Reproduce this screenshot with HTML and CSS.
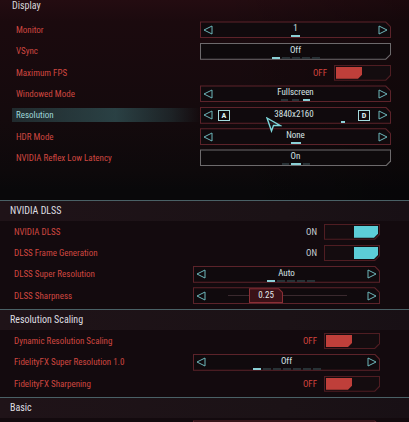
FILE: index.html
```html
<!DOCTYPE html>
<html>
<head>
<meta charset="utf-8">
<title>Graphics settings</title>
<link rel="stylesheet" href="styles.css">
</head>
<body>
<main class="settings">

  <section class="group group--display">
    <h2 class="group-title">Display</h2>
    <div class="rows">
      <div class="row">
        <span class="label">Monitor</span>
        <div class="control">
          <div class="select">
            <svg class="arrow" viewBox="0 0 10 10"><path d="M9 1 L1 5 L9 9 Z"/></svg>
            <div class="value"><span>1</span><span class="ticks"><i class="on w9"></i></span></div>
            <svg class="arrow" viewBox="0 0 10 10"><path d="M1 1 L9 5 L1 9 Z"/></svg>
          </div>
        </div>
      </div>
      <div class="row">
        <span class="label">VSync</span>
        <div class="control">
          <div class="button">
            <div class="value"><span>Off</span><span class="ticks"><i class="on"></i><i></i><i></i><i></i><i></i></span></div>
          </div>
        </div>
      </div>
      <div class="row">
        <span class="label">Maximum FPS</span>
        <div class="control control--toggle">
          <span class="state state--off">OFF</span>
          <span class="toggle toggle--off"><i class="fill"></i></span>
        </div>
      </div>
      <div class="row">
        <span class="label">Windowed Mode</span>
        <div class="control">
          <div class="select">
            <svg class="arrow" viewBox="0 0 10 10"><path d="M9 1 L1 5 L9 9 Z"/></svg>
            <div class="value"><span>Fullscreen</span><span class="ticks ticks--wide"><i class="w7"></i><i class="w7"></i><i class="on w7"></i></span></div>
            <svg class="arrow" viewBox="0 0 10 10"><path d="M1 1 L9 5 L1 9 Z"/></svg>
          </div>
        </div>
      </div>
      <div class="row row--active">
        <span class="label">Resolution</span>
        <div class="control">
          <div class="select">
            <svg class="arrow" viewBox="0 0 10 10"><path d="M9 1 L1 5 L9 9 Z"/></svg>
            <span class="key key--left">A</span>
            <div class="value"><span>3840x2160</span><span class="ticks ticks--offset"><i class="on w4"></i></span></div>
            <span class="key key--right">D</span>
            <svg class="arrow" viewBox="0 0 10 10"><path d="M1 1 L9 5 L1 9 Z"/></svg>
          </div>
        </div>
        <svg class="cursor" viewBox="0 0 16 16"><path d="M1 1 L14 8.5 L7.5 8.5 L5.5 14 Z"/></svg>
      </div>
      <div class="row">
        <span class="label">HDR Mode</span>
        <div class="control">
          <div class="select">
            <svg class="arrow" viewBox="0 0 10 10"><path d="M9 1 L1 5 L9 9 Z"/></svg>
            <div class="value"><span>None</span><span class="ticks"><i class="on w10"></i></span></div>
            <svg class="arrow" viewBox="0 0 10 10"><path d="M1 1 L9 5 L1 9 Z"/></svg>
          </div>
        </div>
      </div>
      <div class="row">
        <span class="label">NVIDIA Reflex Low Latency</span>
        <div class="control">
          <div class="button">
            <div class="value"><span>On</span><span class="ticks"><i class="w7"></i><i class="on w10"></i><i class="w7"></i></span></div>
          </div>
        </div>
      </div>
    </div>
  </section>

  <section class="group group--lower">
    <h2 class="group-title">NVIDIA DLSS</h2>
    <div class="rows">
      <div class="row">
        <span class="label">NVIDIA DLSS</span>
        <div class="control control--toggle">
          <span class="state">ON</span>
          <span class="toggle toggle--on"><i class="fill"></i></span>
        </div>
      </div>
      <div class="row">
        <span class="label">DLSS Frame Generation</span>
        <div class="control control--toggle">
          <span class="state">ON</span>
          <span class="toggle toggle--on"><i class="fill"></i></span>
        </div>
      </div>
      <div class="row">
        <span class="label">DLSS Super Resolution</span>
        <div class="control">
          <div class="select">
            <svg class="arrow" viewBox="0 0 10 10"><path d="M9 1 L1 5 L9 9 Z"/></svg>
            <div class="value"><span>Auto</span><span class="ticks ticks--auto"><i class="on"></i><i></i><i></i><i></i><i></i></span></div>
            <svg class="arrow" viewBox="0 0 10 10"><path d="M1 1 L9 5 L1 9 Z"/></svg>
          </div>
        </div>
      </div>
      <div class="row">
        <span class="label">DLSS Sharpness</span>
        <div class="control">
          <div class="select">
            <svg class="arrow" viewBox="0 0 10 10"><path d="M9 1 L1 5 L9 9 Z"/></svg>
            <div class="slider">
              <span class="track"></span>
              <span class="thumb">0.25</span>
            </div>
            <svg class="arrow" viewBox="0 0 10 10"><path d="M1 1 L9 5 L1 9 Z"/></svg>
          </div>
        </div>
      </div>
    </div>
  </section>

  <section class="group group--lower">
    <h2 class="group-title">Resolution Scaling</h2>
    <div class="rows">
      <div class="row">
        <span class="label">Dynamic Resolution Scaling</span>
        <div class="control control--toggle">
          <span class="state state--off">OFF</span>
          <span class="toggle toggle--off"><i class="fill"></i></span>
        </div>
      </div>
      <div class="row">
        <span class="label">FidelityFX Super Resolution 1.0</span>
        <div class="control">
          <div class="select">
            <svg class="arrow" viewBox="0 0 10 10"><path d="M9 1 L1 5 L9 9 Z"/></svg>
            <div class="value"><span>Off</span><span class="ticks"><i class="on"></i><i></i><i></i><i></i><i></i><i></i><i></i></span></div>
            <svg class="arrow" viewBox="0 0 10 10"><path d="M1 1 L9 5 L1 9 Z"/></svg>
          </div>
        </div>
      </div>
      <div class="row">
        <span class="label">FidelityFX Sharpening</span>
        <div class="control control--toggle">
          <span class="state state--off">OFF</span>
          <span class="toggle toggle--off"><i class="fill"></i></span>
        </div>
      </div>
    </div>
  </section>

  <section class="group group--lower">
    <h2 class="group-title">Basic</h2>
    <div class="rows">
      <div class="row">
        <span class="label"></span>
        <div class="control">
          <div class="select"></div>
        </div>
      </div>
    </div>
  </section>

</main>
</body>
</html>
```

FILE: styles.css
```css
* { box-sizing: border-box; margin: 0; padding: 0; }

html, body {
  width: 409px;
  height: 422px;
  overflow: hidden;
  background: #09080a;
}

body {
  font-family: "Liberation Sans Narrow", "Roboto Condensed", "Arial Narrow", "Liberation Sans", sans-serif;
  font-size: 9px;
  color: #d3dcde;
}

.settings {
  display: flex;
  flex-direction: column;
}

/* ---------- groups ---------- */
.group-title {
  font-weight: normal;
  font-size: 10px;
  color: #d6d6d8;
}

.group--display {
  height: 200px;
  background:
    linear-gradient(90deg, rgba(0,0,0,0) 0, rgba(0,0,0,0) 55%, rgba(0,0,0,0.25) 100%),
    linear-gradient(180deg, #240c11 0, #1b0a0e 22px, #140a0d 120px, #0d090b 172px, #09080a 190px);
}

.group--display .group-title {
  height: 12px;
  line-height: 12px;
  padding-left: 12px;
}

.group--display .rows {
  padding-top: 7.33px;
}

.group--lower {
  border-top: 1px solid #4a6166;
  background: #130a0e;
  padding-bottom: 3px;
}

.group--lower .group-title {
  height: 20px;
  line-height: 20px;
  padding-left: 10px;
  background: linear-gradient(90deg, #1f1318 0, #1b1216 70%, #181015 100%);
  color: #dedee0;
}

/* ---------- rows ---------- */
.row {
  position: relative;
  display: flex;
  align-items: center;
  height: 21.33px;
}

.group--display .row { padding: 0 18px 0 12px; }
.group--lower .row { padding: 0 29px 0 10px; }

.label {
  flex: 1;
  align-self: center;
  height: 14px;
  line-height: 14px;
  padding-left: 4px;
  color: #cf4740;
  white-space: nowrap;
}

.row--active .label {
  color: #9fd6d8;
  background: linear-gradient(90deg, rgba(62,118,122,0.30) 0, rgba(72,140,144,0.42) 55%, rgba(60,120,124,0.22) 85%, rgba(60,120,124,0) 100%);
}

.control {
  display: flex;
  align-items: center;
}

.group--display .control { width: 191px; }
.group--lower .control { width: 187px; }

.control--toggle {
  justify-content: flex-end;
  gap: 7px;
}

/* ---------- framed boxes ---------- */
.select,
.button {
  position: relative;
  flex: 1;
  height: 17px;
  display: flex;
  align-items: center;
  padding: 0 3px;
}

.select {
  background: #5c232a;
  clip-path: polygon(0 0, calc(100% - 5px) 0, 100% 5px, 100% 100%, 0 100%);
}

.select::before {
  content: "";
  position: absolute;
  inset: 1px;
  background: #100a0d;
  clip-path: polygon(0 0, calc(100% - 4.6px) 0, 100% 4.6px, 100% 100%, 0 100%);
}

.button {
  background: #6d6a6c;
  clip-path: polygon(0 0, 100% 0, 100% calc(100% - 5px), calc(100% - 5px) 100%, 0 100%);
}

.button::before {
  content: "";
  position: absolute;
  inset: 1px;
  background: #0e0a0c;
  clip-path: polygon(0 0, 100% 0, 100% calc(100% - 4.6px), calc(100% - 4.6px) 100%, 0 100%);
}

.select > *,
.button > * {
  position: relative;
  z-index: 1;
}

.arrow {
  width: 10px;
  height: 10px;
  flex: none;
}

.arrow path {
  fill: none;
  stroke: #6cb7bb;
  stroke-width: 1;
  stroke-linejoin: miter;
}

.value {
  flex: 1;
  display: flex;
  flex-direction: column;
  align-items: center;
  gap: 2px;
  line-height: 10px;
  padding-top: 1px;
  color: #d6e2e4;
}

.ticks {
  display: flex;
  gap: 2px;
  height: 2px;
}

.ticks i {
  display: block;
  width: 8px;
  height: 2px;
  background: #283236;
}

.ticks i.on { background: #8bd0d6; }
.ticks i.w4 { width: 4px; }
.ticks i.w7 { width: 7px; }
.ticks i.w9 { width: 9px; }
.ticks i.w10 { width: 10px; }

.ticks--wide { gap: 4px; }
.ticks--offset { padding-left: 98px; }
.ticks--auto { padding-left: 8px; }

.key {
  flex: none;
  width: 12px;
  height: 11px;
  border: 1px solid #a6dadd;
  color: #dff2f2;
  font-size: 8px;
  font-weight: bold;
  line-height: 9px;
  text-align: center;
}

.key--left { margin-left: 5px; }
.key--right { margin-right: 8px; }

/* ---------- toggles ---------- */
.state {
  color: #c8d0d3;
  font-size: 9px;
}

.state--off { color: #d2443e; }

.toggle {
  position: relative;
  display: flex;
  width: 57px;
  height: 16px;
  padding: 2px;
  background: #4f1d22;
  clip-path: polygon(0 0, 100% 0, 100% calc(100% - 5px), calc(100% - 5px) 100%, 0 100%);
}

.group--lower .toggle { width: 56px; }

.toggle::before {
  content: "";
  position: absolute;
  inset: 1px;
  background: #140c0f;
  clip-path: polygon(0 0, 100% 0, 100% calc(100% - 4.6px), calc(100% - 4.6px) 100%, 0 100%);
}

.toggle .fill {
  position: relative;
  z-index: 1;
  display: block;
  width: 26px;
  height: 100%;
  clip-path: polygon(0 0, 100% 0, 100% calc(100% - 4px), calc(100% - 4px) 100%, 0 100%);
}

.toggle--off .fill { background: #bf3f3a; }

.toggle--on { justify-content: flex-end; }
.toggle--on .fill { background: #5ccdd7; width: 24px; }

/* ---------- slider ---------- */
.slider {
  flex: 1;
  position: relative;
  height: 100%;
  display: flex;
  align-items: center;
  margin: 0 20px 0 22px;
}

.track {
  flex: 1;
  height: 1px;
  background: #3a292e;
}

.thumb {
  position: absolute;
  left: 21px;
  top: 1px;
  width: 34px;
  height: 15px;
  line-height: 15px;
  text-align: center;
  color: #e2eaec;
  background: #8a2e35;
  clip-path: polygon(0 0, calc(100% - 4px) 0, 100% 4px, 100% 100%, 0 100%);
}

.thumb::before {
  content: "";
  position: absolute;
  inset: 1px;
  z-index: -1;
  background: #3a1117;
  clip-path: polygon(0 0, calc(100% - 3.6px) 0, 100% 3.6px, 100% 100%, 0 100%);
}

/* ---------- mouse pointer overlay ---------- */
.cursor {
  position: absolute;
  left: 266px;
  top: 12px;
  width: 16px;
  height: 16px;
  z-index: 5;
}

.cursor path {
  fill: rgba(20, 30, 34, 0.4);
  stroke: #7ed6da;
  stroke-width: 1.4;
  stroke-linejoin: miter;
}
```
